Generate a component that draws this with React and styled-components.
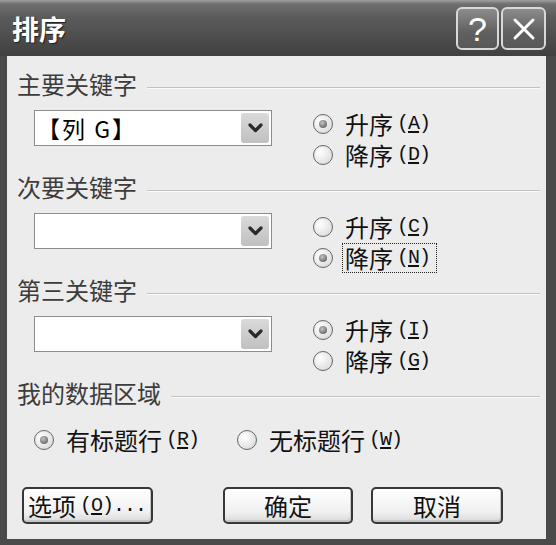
import React from "react";
import styled, { createGlobalStyle } from "styled-components";

const GlobalStyle = createGlobalStyle`
  html, body { margin: 0; padding: 0; background: #ffffff; }
  body { font-family: "Noto Sans CJK SC", "Noto Sans", sans-serif; }
  * { box-sizing: border-box; }
`;

const Window = styled.div`
  width: 556px;
  height: 545px;
  background: #4a4a4a;
  display: flex;
  flex-direction: column;
`;

const TitleBar = styled.div`
  height: 56px;
  display: flex;
  align-items: flex-start;
  padding: 0 10px 0 12px;
  background: linear-gradient(
    #a0a0a0 0px,
    #707070 4px,
    #5c5c5c 16px,
    #4e4e4e 36px,
    #404040 56px
  );
`;

const Title = styled.div`
  flex: 1;
  color: #ffffff;
  font-size: 27px;
  font-weight: 700;
  line-height: 30px;
  margin-top: 14px;
  text-shadow: 1px 1px 1px #1e1e1e;
`;

const CaptionButtons = styled.div`
  display: flex;
  gap: 2px;
  margin-top: 7px;
`;

const CaptionButton = styled.div`
  width: ${(p) => p.$w}px;
  height: 43px;
  border: 2px solid #d8d8d8;
  border-radius: 6px;
  background: linear-gradient(#8c8c8c, #606060 60%, #585858);
  display: flex;
  align-items: center;
  justify-content: center;
  color: #ffffff;
  font-family: "Liberation Sans", Arial, sans-serif;
  font-weight: 400;
  font-size: 34px;
  line-height: 1;
`;

const Body = styled.div`
  flex: 1;
  margin: 0 10px 6px 7px;
  background: #ececec;
  display: flex;
  flex-direction: column;
  gap: 3px;
  padding: 14px 6px 15px 10px;
`;

const Section = styled.div`
  display: flex;
  flex-direction: column;
`;

const SectionHeader = styled.div`
  height: 28px;
  display: flex;
  align-items: center;
  gap: 10px;
`;

const GroupLabel = styled.span`
  font-size: 24px;
  line-height: 28px;
  color: #3c3c3c;
  white-space: nowrap;
`;

const Rule = styled.div`
  flex: 1;
  margin-top: 8px;
  border-top: 1px solid #c2c2c2;
  border-bottom: 1px solid #fafafa;
`;

const SectionContent = styled.div`
  display: flex;
  align-items: flex-start;
  margin-top: 10px;
  padding-left: 17px;
  gap: 41px;
`;

const Combo = styled.div`
  width: 238px;
  height: 36px;
  margin-top: 2px;
  border: 1px solid #8c8c8c;
  background: #ffffff;
  display: flex;
  align-items: center;
  padding: 0 2px 0 2px;
`;

const ComboText = styled.span`
  flex: 1;
  font-size: 23px;
  line-height: 30px;
  letter-spacing: 2px;
  color: #000000;
  white-space: nowrap;
`;

const DropButton = styled.div`
  width: 28px;
  height: 30px;
  border-radius: 3px;
  background: linear-gradient(#dadada, #c0c0c0);
  display: flex;
  align-items: center;
  justify-content: center;
`;

const RadioColumn = styled.div`
  display: flex;
  flex-direction: column;
`;

const RadioRow = styled.div`
  height: 31px;
  display: flex;
  align-items: center;
  gap: 9px;
`;

const RadioCircle = styled.span`
  position: relative;
  width: 20px;
  height: 20px;
  flex: none;
  border-radius: 50%;
  border: 1px solid #666666;
  background: radial-gradient(circle at 35% 35%, #ffffff, #d4d4d4);
  &::after {
    content: "";
    display: ${(p) => (p.$checked ? "block" : "none")};
    position: absolute;
    inset: 5px;
    border-radius: 50%;
    background: radial-gradient(circle at 40% 35%, #c4c4c4, #4c4c4c);
  }
`;

const RadioText = styled.span`
  display: inline-flex;
  align-items: center;
  height: 30px;
  font-size: 24px;
  line-height: 28px;
  color: #111111;
  padding: 0 6px 0 2px;
  border: 1px dotted ${(p) => (p.$focus ? "#222222" : "transparent")};
  white-space: nowrap;
`;

const Key = styled.span`
  font-family: "Liberation Mono", "DejaVu Sans Mono", monospace;
  font-size: 20px;
  line-height: 24px;
  margin-left: 4px;
  letter-spacing: -1px;
  u {
    text-underline-offset: 2px;
  }
`;

const RangeRow = styled.div`
  display: flex;
  align-items: center;
  margin-top: 17px;
  padding-left: 17px;
  gap: 31px;
`;

const ButtonRow = styled.div`
  margin-top: auto;
  display: flex;
  align-items: center;
  padding: 0 37px 0 5px;
  gap: 18px;
`;

const Spacer = styled.div`
  flex: 1;
`;

const Button = styled.div`
  width: ${(p) => p.$w}px;
  height: 37px;
  border: 2px solid #383838;
  border-radius: 5px;
  background: linear-gradient(#ffffff, #f0f0f0 70%, #d8d8d8);
  box-shadow: inset -1px -2px 0 #c6c6c6;
  display: flex;
  align-items: center;
  justify-content: ${(p) => (p.$left ? "flex-start" : "center")};
  padding-left: ${(p) => (p.$left ? 4 : 0)}px;
  font-size: 24px;
  color: #111111;
  white-space: nowrap;
`;

const Chevron = () => (
  <svg width="15" height="10" viewBox="0 0 15 10">
    <polyline
      points="2,2 7.5,7.5 13,2"
      fill="none"
      stroke="#2a2a2a"
      strokeWidth="3.2"
      strokeLinecap="round"
      strokeLinejoin="round"
    />
  </svg>
);

const CloseIcon = () => (
  <svg width="24" height="24" viewBox="0 0 24 24">
    <path d="M3 3 L21 21 M21 3 L3 21" stroke="#ffffff" strokeWidth="3" strokeLinecap="round" />
  </svg>
);

const Radio = ({ checked, focus, text, k }) => (
  <RadioRow>
    <RadioCircle $checked={checked} />
    <RadioText $focus={focus}>
      {text}
      <Key>
        (<u>{k}</u>)
      </Key>
    </RadioText>
  </RadioRow>
);

const KeySection = ({ label, value, asc, focusDesc, ascKey, descKey }) => (
  <Section>
    <SectionHeader>
      <GroupLabel>{label}</GroupLabel>
      <Rule />
    </SectionHeader>
    <SectionContent>
      <Combo>
        <ComboText>{value}</ComboText>
        <DropButton>
          <Chevron />
        </DropButton>
      </Combo>
      <RadioColumn>
        <Radio checked={asc} text="升序" k={ascKey} />
        <Radio checked={!asc} focus={focusDesc} text="降序" k={descKey} />
      </RadioColumn>
    </SectionContent>
  </Section>
);

export default function App() {
  return (
    <>
      <GlobalStyle />
      <Window>
        <TitleBar>
          <Title>排序</Title>
          <CaptionButtons>
            <CaptionButton $w={43}>?</CaptionButton>
            <CaptionButton $w={45}>
              <CloseIcon />
            </CaptionButton>
          </CaptionButtons>
        </TitleBar>
        <Body>
          <KeySection label="主要关键字" value="【列 G】" asc ascKey="A" descKey="D" />
          <KeySection label="次要关键字" value="" asc={false} focusDesc ascKey="C" descKey="N" />
          <KeySection label="第三关键字" value="" asc ascKey="I" descKey="G" />
          <Section>
            <SectionHeader>
              <GroupLabel>我的数据区域</GroupLabel>
              <Rule />
            </SectionHeader>
            <RangeRow>
              <Radio checked text="有标题行" k="R" />
              <Radio text="无标题行" k="W" />
            </RangeRow>
          </Section>
          <ButtonRow>
            <Button $w={131} $left>
              选项
              <Key>
                (<u>O</u>)...
              </Key>
            </Button>
            <Spacer />
            <Button $w={130}>确定</Button>
            <Button $w={132}>取消</Button>
          </ButtonRow>
        </Body>
      </Window>
    </>
  );
}
